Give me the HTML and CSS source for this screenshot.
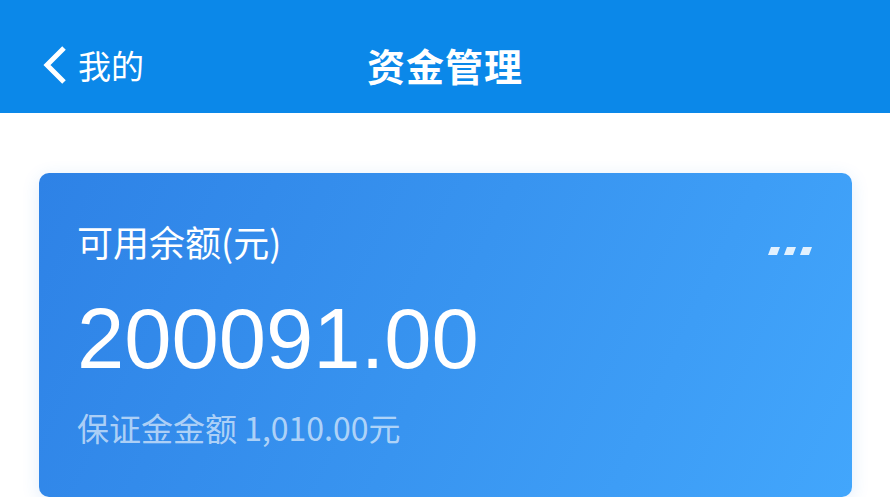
FILE: index.html
```html
<!DOCTYPE html>
<html lang="zh">
<head>
<meta charset="utf-8">
<link rel="stylesheet" href="styles.css">
</head>
<body>
<header class="nav">
  <div class="nav-left">
    <svg class="back" width="26" height="38" viewBox="0 0 26 38"><polyline points="22,2 5,19 22,36" fill="none" stroke="#fff" stroke-width="5" stroke-linejoin="miter"/></svg>
    <span class="back-text">我的</span>
  </div>
  <h1 class="nav-title">资金管理</h1>
  <div class="nav-right"></div>
</header>
<main class="content">
  <section class="card">
    <div class="card-top">
      <span class="label">可用余额(元)</span>
      <svg class="more" width="46" height="9" viewBox="0 0 46 9"><polygon points="3,0 12,0 9,8 0,8" /><polygon points="19,0 28,0 25,8 16,8" /><polygon points="35,0 44,0 41,8 32,8" /></svg>
    </div>
    <div class="amount">200091.00</div>
    <div class="deposit">保证金金额 1,010.00元</div>
  </section>
</main>
</body>
</html>
```
FILE: styles.css
```css
html, body {
  margin: 0;
  padding: 0;
  background: #ffffff;
  font-family: "Noto Sans CJK SC", "Noto Sans", sans-serif;
}
.nav {
  height: 113px;
  box-sizing: border-box;
  padding-top: 16px;
  background: #0b88e9;
  color: #fff;
  display: grid;
  grid-template-columns: 1fr auto 1fr;
  align-items: center;
}
.nav-left {
  display: flex;
  align-items: center;
  padding-left: 42px;
  gap: 10px;
}
.back { display: block; }
.back-text {
  font-size: 33px;
  line-height: 40px;
}
.nav-title {
  margin: 0;
  font-size: 38px;
  font-weight: 700;
  line-height: 48px;
  letter-spacing: 1px;
}
.content {
  padding: 60px 38px 0 39px;
}
.card {
  border-radius: 10px;
  background: linear-gradient(115deg, #2e82e6 0%, #3894f0 50%, #42a6fc 100%);
  box-shadow: 0 4px 18px rgba(40, 130, 230, 0.14);
  padding: 46px 38px 40px 38px;
  height: 324px;
  box-sizing: border-box;
  color: #fff;
}
.card-top {
  display: flex;
  justify-content: space-between;
  align-items: flex-start;
}
.label {
  font-size: 36px;
  line-height: 44px;
}
.more {
  fill: rgba(255, 255, 255, 0.85);
  margin-top: 28px;
}
.amount {
  font-family: "Liberation Sans", Arial, sans-serif;
  font-size: 85px;
  line-height: 100px;
  margin-top: 26px;
}
.deposit {
  font-size: 32px;
  line-height: 40px;
  margin-top: 18px;
  color: rgba(255, 255, 255, 0.62);
}
```
